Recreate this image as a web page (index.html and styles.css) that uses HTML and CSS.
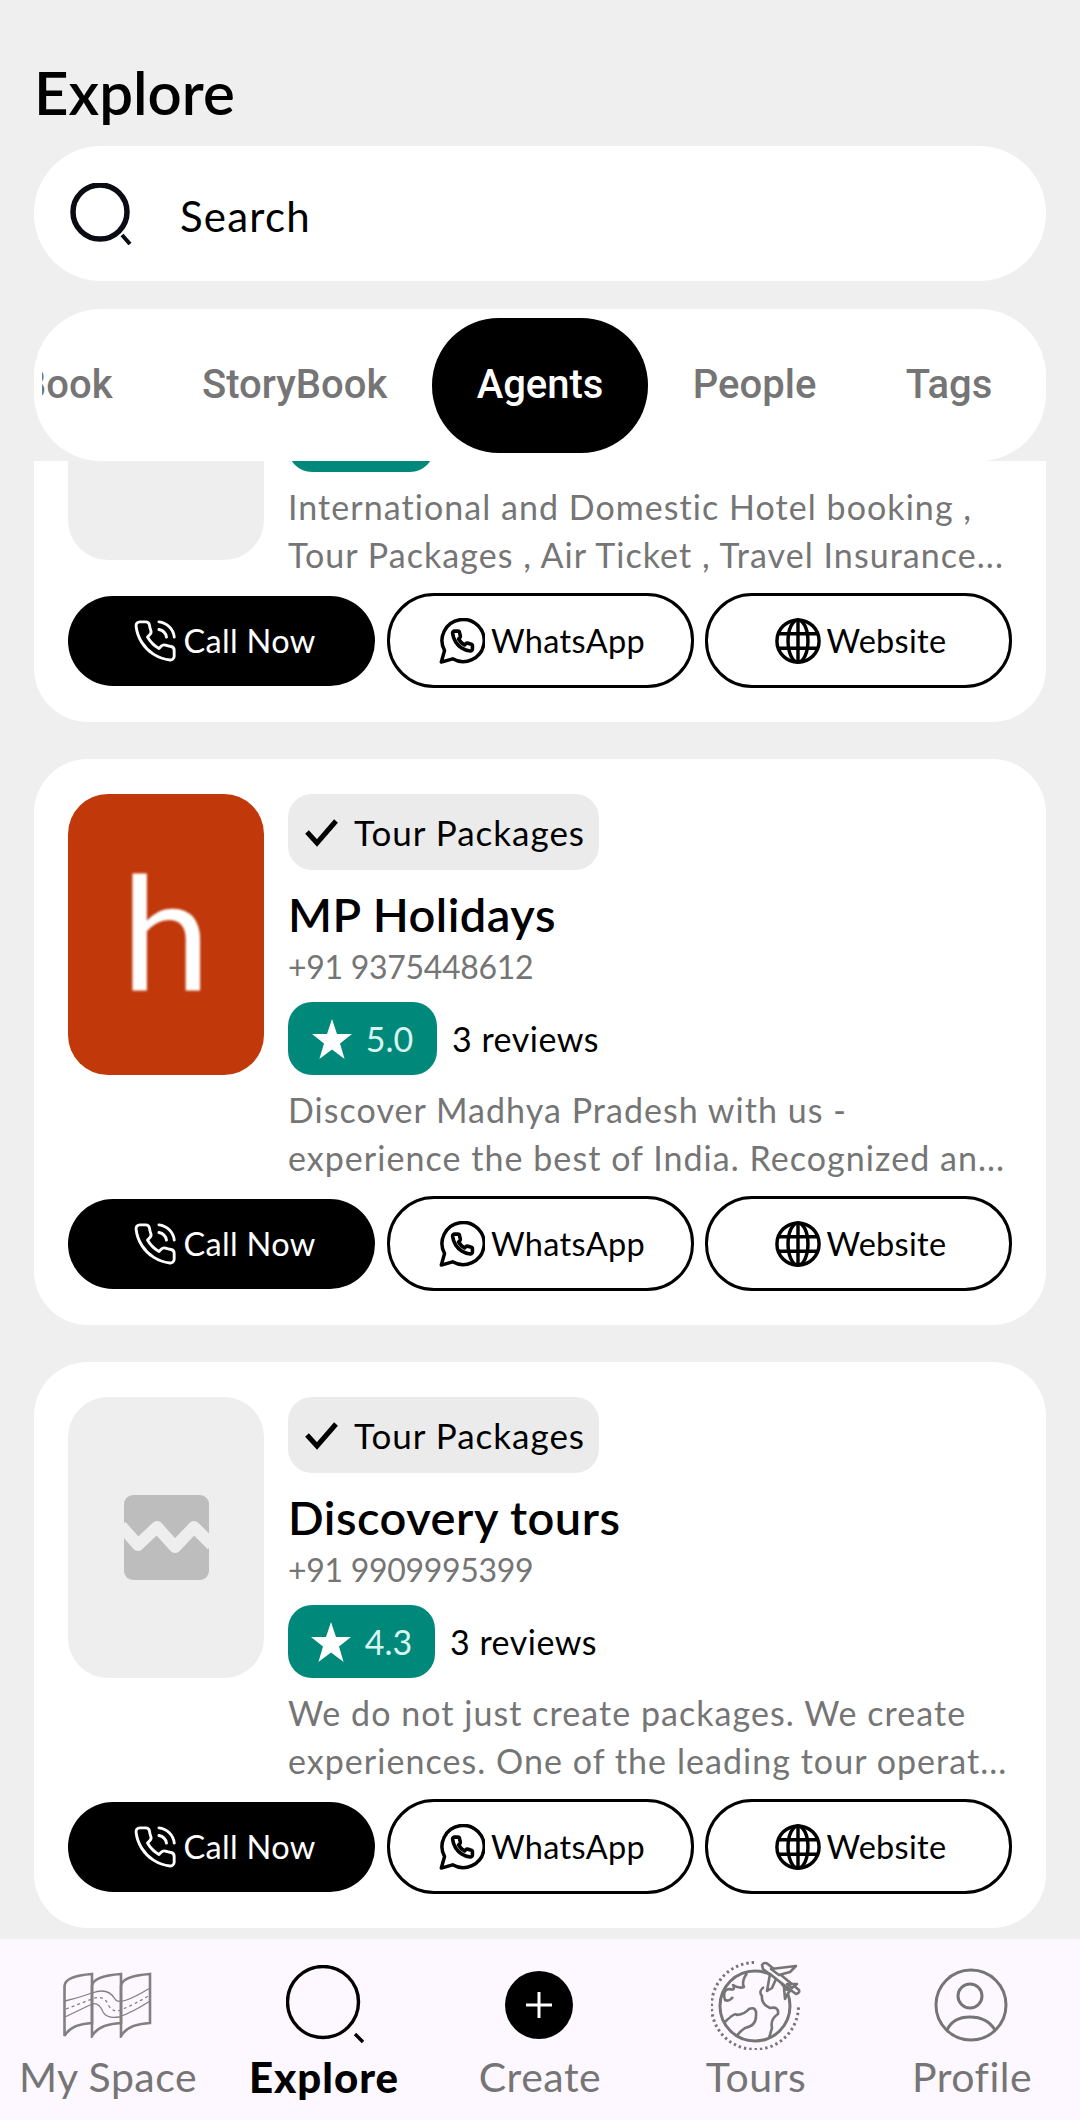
FILE: index.html
```html
<!DOCTYPE html>
<html lang="en">
<head>
<meta charset="utf-8">
<title>Explore</title>
<link rel="stylesheet" href="styles.css">
</head>
<body>
<svg class="defs" width="0" height="0" aria-hidden="true">
  <symbol id="i-phone" viewBox="0 0 24 24"><path d="M22 16.92v3a2 2 0 0 1-2.18 2 19.79 19.79 0 0 1-8.63-3.07 19.5 19.5 0 0 1-6-6 19.79 19.79 0 0 1-3.07-8.67A2 2 0 0 1 4.11 2h3a2 2 0 0 1 2 1.72 12.84 12.84 0 0 0 .7 2.81 2 2 0 0 1-.45 2.11L8.09 9.91a16 16 0 0 0 6 6l1.27-1.27a2 2 0 0 1 2.11-.45 12.84 12.84 0 0 0 2.81.7A2 2 0 0 1 22 16.92z"/><path d="M14.05 2a9 9 0 0 1 8 7.94"/><path d="M14.05 6A5 5 0 0 1 18 10"/></symbol>
  <symbol id="i-wa" viewBox="0 0 24 24"><path d="M1.200 23l1.700-6a11 11 0 1 1 4.200 4.300z"/><path transform="translate(6 5.800) scale(.52)" stroke-width="3.600" d="M22 16.92v3a2 2 0 0 1-2.18 2 19.79 19.79 0 0 1-8.63-3.07 19.5 19.5 0 0 1-6-6 19.79 19.79 0 0 1-3.07-8.67A2 2 0 0 1 4.11 2h3a2 2 0 0 1 2 1.72 12.84 12.84 0 0 0 .7 2.81 2 2 0 0 1-.45 2.11L8.09 9.91a16 16 0 0 0 6 6l1.27-1.27a2 2 0 0 1 2.11-.45 12.84 12.84 0 0 0 2.81.7A2 2 0 0 1 22 16.92z"/></symbol>
  <symbol id="i-globe" viewBox="0 0 24 24"><circle cx="12" cy="12" r="11"/><ellipse cx="12" cy="12" rx="5.200" ry="11"/><path d="M12 1v22M2 8.200h20M2 15.800h20"/></symbol>
  <symbol id="i-broken" viewBox="0 0 85 85"><rect width="85" height="85" rx="9" fill="#bdbdbd"/><path d="M-3 31L14 50 33 32 51 52 70 32 88 50" fill="none" stroke="#eeeeee" stroke-width="12" stroke-linejoin="round"/></symbol>
  <symbol id="i-check" viewBox="0 0 34 30"><path d="M2 15l10 11L31 4" fill="none" stroke="#000" stroke-width="5"/></symbol>
  <symbol id="i-star" viewBox="0 0 40 40"><path d="M20 0l5 15h15l-12 9.500 4.600 15.500L20 30.500 7.400 40 12 24.500 0 15h15z" fill="#fff"/></symbol>
</svg>

<div class="app">
  <header class="top">
    <h1 class="page-title">Explore</h1>
    <div class="search">
      <svg class="search-icon" viewBox="0 0 62 62"><circle cx="30" cy="29" r="27" fill="none" stroke="#0b0b14" stroke-width="5.500"/><path d="M52 52l8 9" stroke="#0b0b14" stroke-width="4" fill="none"/></svg>
      <span class="search-text">Search</span>
    </div>
    <nav class="tabs">
      <div class="tabs-scroll">
        <span class="tab">Book</span>
        <span class="tab">StoryBook</span>
        <span class="tab tab-active">Agents</span>
        <span class="tab">People</span>
        <span class="tab">Tags</span>
      </div>
    </nav>
  </header>

  <main class="list">
    <article class="card card-scrolled">
      <div class="card-main">
        <div class="thumb"></div>
        <div class="info">
          <div class="chip chip-empty"></div>
          <div class="name">&nbsp;</div>
          <div class="phone">&nbsp;</div>
          <div class="rating-row"><div class="rating rating-empty"></div></div>
          <p class="desc"><span>International and Domestic Hotel booking ,</span><span>Tour Packages , Air Ticket , Travel Insurance...</span></p>
        </div>
      </div>
      <div class="actions">
        <a class="btn btn-call"><svg class="ic"><use href="#i-phone"/></svg>Call Now</a>
        <a class="btn"><svg class="ic ic-bold"><use href="#i-wa"/></svg>WhatsApp</a>
        <a class="btn"><svg class="ic ic-bold"><use href="#i-globe"/></svg>Website</a>
      </div>
    </article>

    <article class="card">
      <div class="card-main">
        <div class="thumb thumb-logo"><span class="logo-h">h</span></div>
        <div class="info">
          <div class="chip"><svg class="check"><use href="#i-check"/></svg>Tour Packages</div>
          <div class="name">MP Holidays</div>
          <div class="phone">+91 9375448612</div>
          <div class="rating-row"><div class="rating"><svg class="star"><use href="#i-star"/></svg>5.0</div><span class="reviews">3 reviews</span></div>
          <p class="desc"><span>Discover Madhya Pradesh with us -</span><span>experience the best of India. Recognized an...</span></p>
        </div>
      </div>
      <div class="actions">
        <a class="btn btn-call"><svg class="ic"><use href="#i-phone"/></svg>Call Now</a>
        <a class="btn"><svg class="ic ic-bold"><use href="#i-wa"/></svg>WhatsApp</a>
        <a class="btn"><svg class="ic ic-bold"><use href="#i-globe"/></svg>Website</a>
      </div>
    </article>

    <article class="card">
      <div class="card-main">
        <div class="thumb"><svg class="broken"><use href="#i-broken"/></svg></div>
        <div class="info">
          <div class="chip"><svg class="check"><use href="#i-check"/></svg>Tour Packages</div>
          <div class="name">Discovery tours</div>
          <div class="phone">+91 9909995399</div>
          <div class="rating-row"><div class="rating rating-narrow"><svg class="star"><use href="#i-star"/></svg>4.3</div><span class="reviews">3 reviews</span></div>
          <p class="desc"><span>We do not just create packages. We create</span><span>experiences. One of the leading tour operat...</span></p>
        </div>
      </div>
      <div class="actions">
        <a class="btn btn-call"><svg class="ic"><use href="#i-phone"/></svg>Call Now</a>
        <a class="btn"><svg class="ic ic-bold"><use href="#i-wa"/></svg>WhatsApp</a>
        <a class="btn"><svg class="ic ic-bold"><use href="#i-globe"/></svg>Website</a>
      </div>
    </article>
  </main>

  <footer class="bottom-nav">
    <a class="nav-item">
      <span class="nav-icon">
        <svg class="map" viewBox="0 0 90 66" fill="none" stroke="#808080">
          <g stroke-width="2.600"><path d="M1.500 64V14Q2 4 29 2V51Q8 52 1.500 64Z"/><path d="M29 64V14Q30 4 58 2V51Q36 52 29 64Z"/><path d="M58 64V14Q59 4 87 2V51Q65 52 58 64Z"/></g>
          <g stroke-width="1.300"><path d="M2 29Q15 26 29 21 45 15 52 27 56 35 87 16"/><path d="M2 45L29 32Q36 30 40 40 44 47 56 45 70 40 87 29"/><path stroke-dasharray="3 3" d="M3 37L29 27Q41 22 46 34 50 41 58 38 72 32 87 23"/></g>
        </svg>
      </span>
      <span class="nav-label">My Space</span>
    </a>
    <a class="nav-item nav-item-active">
      <span class="nav-icon">
        <svg class="nav-search" viewBox="0 0 80 80" fill="none" stroke="#000"><circle cx="37" cy="37" r="35.500" stroke-width="3.400"/><path d="M69 69l8 8" stroke-width="3.400"/></svg>
      </span>
      <span class="nav-label">Explore</span>
    </a>
    <a class="nav-item">
      <span class="nav-icon">
        <svg class="create" viewBox="0 0 68 68"><circle cx="34" cy="34" r="34" fill="#000"/><path d="M34 21v26M21 34h26" stroke="#fff" stroke-width="3"/></svg>
      </span>
      <span class="nav-label">Create</span>
    </a>
    <a class="nav-item">
      <span class="nav-icon">
        <svg class="tours" viewBox="0 0 90 90" fill="none" stroke="#757575">
          <path stroke-width="3" stroke-dasharray="2.400 3" d="M43 2.500A43.500 43.500 0 1 0 87.500 46"/>
          <circle cx="44" cy="46" r="35" stroke-width="3"/>
          <g stroke-width="2.600" stroke-linejoin="round">
            <path d="M36 13Q30 22 33 27 28 29 22 25 25 31 18 29 11 30 14 40 18 42 22 37"/>
            <path d="M14 62Q24 52 26 55 34 54 38 49 46 46 45 56 45 66 34 68 28 72 26 76"/>
            <path d="M53 27Q47 31 51 36 50 44 59 48 68 46 67 54 59 59 61 68L58 78"/>
          </g>
          <path fill="#fdf8ff" stroke-width="2.600" stroke-linejoin="round" d="M51 5Q54 1 58 5L88 30Q89 33 85 34L52 9Z"/>
          <path fill="#fdf8ff" stroke-width="2.600" stroke-linejoin="round" d="M60 9L85 6 79 12 68 15ZM59 14L56 31 61 28 65 19ZM76 24L86 24 81 28ZM73 28L74 39 77 33 79 31Z"/>
        </svg>
      </span>
      <span class="nav-label">Tours</span>
    </a>
    <a class="nav-item">
      <span class="nav-icon">
        <svg class="profile" viewBox="0 0 74 74" fill="none" stroke="#757575" stroke-width="3"><circle cx="37" cy="37" r="35"/><circle cx="36" cy="28" r="12"/><path d="M13 62Q19 49 36 49 53 49 61 62"/></svg>
      </span>
      <span class="nav-label">Profile</span>
    </a>
  </footer>
</div>
</body>
</html>
```
FILE: styles.css
```css
* { box-sizing: border-box; }
html, body { margin: 0; padding: 0; }
body { font-family: "Lato", "Liberation Sans", sans-serif; background: #efefef; color: #000; }
.defs { position: absolute; }
.app { width: 1080px; height: 2120px; display: flex; flex-direction: column; overflow: hidden; }

.top { flex: none; padding: 0 34px; }
.page-title { margin: 0; height: 146px; padding-top: 61px; font-size: 60px; line-height: 62px; font-weight: 600; }
.search { height: 135px; border-radius: 67px; background: #fff; display: flex; align-items: center; padding-left: 36px; }
.search-icon { width: 62px; height: 62px; flex: none; }
.search-text { margin-left: 48px; padding-top: 5px; font-size: 42px; letter-spacing: 1.200px; }

.tabs { margin-top: 28px; height: 152px; border-radius: 67px; background: #fff; padding: 9px 9px 8px 8px; }
.tabs-scroll { height: 135px; display: flex; justify-content: flex-end; overflow: hidden; }
.tab { flex: none; height: 135px; padding: 0 44.700px 2px; display: flex; align-items: center; font-family: "Roboto", sans-serif; font-weight: 500; font-size: 40px; color: #757575; }
.tab-active { background: #000; color: #fff; border-radius: 67px; }

.list { flex: 1; min-height: 0; overflow: hidden; padding: 0 34px; display: flex; flex-direction: column; gap: 37px; }
.card { flex: none; height: 566px; background: #fff; border-radius: 54px; padding: 35px 34px 0; }
.card-scrolled { margin-top: -305px; }
.card-main { display: flex; gap: 24px; height: 402px; }
.thumb { flex: none; width: 196px; height: 281px; border-radius: 40px; background: #eeeeee; display: flex; align-items: center; justify-content: center; overflow: hidden; }
.card-scrolled .thumb { margin-top: 88px; }
.thumb-logo { background: #c1390b; }
.logo-h { padding-bottom: 12px; color: #fff; font-size: 160px; line-height: 1; filter: blur(1px); }
.broken { width: 85px; height: 85px; }
.info { flex: 1; min-width: 0; }
.chip { display: inline-flex; align-items: center; height: 76px; padding: 0 14px 0 17px; border-radius: 24px; background: #ebebeb; font-size: 35px; letter-spacing: 1px; vertical-align: top; }
.chip-empty { width: 310px; }
.check { width: 34px; height: 30px; margin-right: 15px; }
.name { margin-top: 13px; height: 62px; line-height: 62px; font-size: 47px; font-weight: 600; letter-spacing: .5px; }
.phone { height: 44px; line-height: 44px; font-size: 32px; letter-spacing: -.3px; color: #757575; }
.rating-row { margin-top: 13px; height: 73px; display: flex; align-items: center; gap: 15px; }
.rating { width: 149px; height: 73px; border-radius: 24px; background: #00897b; color: #d9f5f0; display: flex; align-items: center; justify-content: center; gap: 14px; font-size: 34px; }
.rating-narrow { width: 147px; }
.rating-empty { width: 146px; }
.star { width: 40px; height: 40px; }
.reviews { font-size: 34px; letter-spacing: .5px; }
.desc { margin: 11px 0 0; font-size: 34px; line-height: 48px; color: #757575; letter-spacing: 1.050px; white-space: nowrap; }
.desc span { display: block; }

.actions { display: grid; grid-template-columns: repeat(3, 307px); column-gap: 11.500px; align-items: center; height: 95px; }
.btn { height: 95px; padding-left: 4px; border: 3px solid #000; border-radius: 47px; background: #fff; display: flex; align-items: center; justify-content: center; gap: 6px; font-size: 32.500px; letter-spacing: .3px; }
.btn-call { height: 90px; background: #000; color: #fff; border: 0; }
.ic { width: 46px; height: 46px; flex: none; fill: none; stroke: currentColor; stroke-width: 1.500; stroke-linejoin: round; stroke-linecap: round; }
.ic-bold { stroke-width: 1.800; }

.bottom-nav { flex: none; height: 181px; background: #fdf8ff; display: grid; grid-template-columns: repeat(5, 216px); }
.nav-item { display: flex; flex-direction: column; align-items: center; padding-top: 20px; color: #757575; }
.nav-item-active { color: #000; }
.nav-icon { height: 92px; display: flex; align-items: center; justify-content: center; }
.nav-label { margin-top: 3px; font-size: 41px; line-height: 46px; letter-spacing: .5px; }
.nav-item-active .nav-label { font-size: 42px; font-weight: 900; letter-spacing: 1px; }
.map { width: 90px; height: 66px; }
.nav-search { width: 80px; height: 80px; margin-left: 4px; }
.create { width: 68px; height: 68px; margin-right: 2px; }
.tours { width: 90px; height: 90px; }
.profile { width: 74px; height: 74px; margin-right: 3px; }
```
